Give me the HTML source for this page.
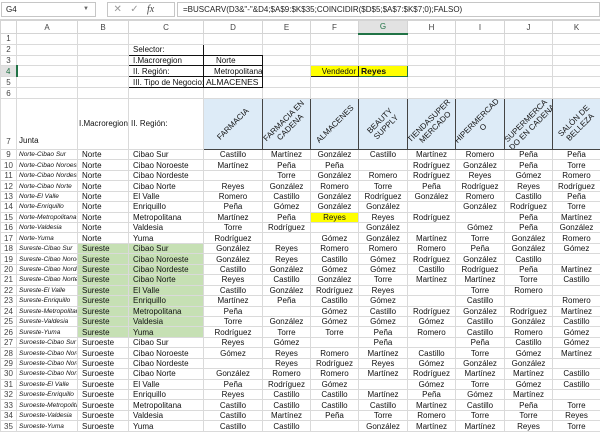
<!DOCTYPE html>
<html><head><meta charset="utf-8"><style>
*{margin:0;padding:0;box-sizing:border-box}
body{width:600px;height:432px;overflow:hidden;background:#fff;font-family:"Liberation Sans",Arial,sans-serif;position:relative}
#fb{position:absolute;left:0;top:0;width:600px;height:20px;background:#fff;border-bottom:1px solid #d4d4d4}
#nb{position:absolute;left:1px;top:2px;width:95px;height:15px;border:1px solid #c6c6c6;font-size:8px;line-height:13px;padding-left:4px;color:#222}
#nb span{position:absolute;right:6px;top:0;font-size:6px;color:#666}
#ic{position:absolute;left:107px;top:2px;width:68px;height:15px;border:1px solid #c6c6c6;font-size:10px;color:#999;line-height:13px}
#fx{position:absolute;left:177px;top:2px;width:423px;height:15px;border:1px solid #c6c6c6;font-size:8px;line-height:13px;padding-left:5px;color:#222;white-space:nowrap}
table{position:absolute;left:0;top:20px;border-collapse:collapse;table-layout:fixed;width:600px}
td{border:1px solid #dadada;font-size:8px;white-space:nowrap;overflow:hidden;padding:0 2px;color:#111;height:10.44px;line-height:9px;text-align:center}
tr.ch td{background:#fff;color:#444;height:13px;text-align:center;border-color:#d4d4d4}
td.rh{color:#444;text-align:center;padding:0;font-size:8px;background:#fff}
td.a{font-style:italic;font-size:6.5px;text-align:left;padding-left:2px}
td.l{text-align:left;padding-left:4px}
td.g{background:#c6e0b4}
.t td{height:10.83px}
td.hd{background:#ddebf7;border:1px solid #444;position:relative;padding:0}
td.hd div{position:absolute;left:50%;top:50%;width:64px;transform:translate(-50%,-50%) rotate(-45deg);text-align:center;font-size:8px;line-height:9px;white-space:normal;color:#111}
</style></head><body>
<div id="fb"><div id="nb">G4<span>▼</span></div>
<div id="ic">&nbsp;&nbsp;✕&nbsp;&nbsp;&nbsp;✓&nbsp;&nbsp;&nbsp;<i style="font-family:'Liberation Serif',serif;color:#444">fx</i></div>
<div id="fx">=BUSCARV(D3&amp;"-"&amp;D4;$A$9:$K$35;COINCIDIR($D$5;$A$7:$K$7;0);FALSO)</div></div>
<table>
<colgroup><col style="width:16px"><col style="width:61px"><col style="width:51px"><col style="width:75px"><col style="width:59px"><col style="width:48px"><col style="width:48px"><col style="width:49px"><col style="width:48px"><col style="width:49px"><col style="width:48px"><col style="width:48px"></colgroup>
<tr class="ch"><td></td><td>A</td><td>B</td><td>C</td><td>D</td><td>E</td><td>F</td><td style="background:#e2e2e2;color:#217346;border-bottom:2px solid #217346">G</td><td>H</td><td>I</td><td>J</td><td>K</td></tr>
<tr class="t"><td class="rh">1</td><td></td><td></td><td></td><td></td><td></td><td></td><td></td><td></td><td></td><td></td><td></td></tr>
<tr class="t"><td class="rh">2</td><td></td><td></td><td class="l" style="border:1.5px solid #111">Selector:</td><td style="border-bottom:1.5px solid #111"></td><td></td><td></td><td></td><td></td><td></td><td></td><td></td></tr>
<tr class="t"><td class="rh">3</td><td></td><td></td><td class="l" style="border:1px solid #111;border-left:1.5px solid #111">I.Macroregion</td><td class="l" style="border:1px solid #111;border-right:1.5px solid #111;padding-left:12px">Norte</td><td></td><td></td><td></td><td></td><td></td><td></td><td></td></tr>
<tr class="t"><td class="rh" style="background:#e2e2e2;color:#217346;border-right:2px solid #217346">4</td><td></td><td></td><td class="l" style="border:1px solid #111;border-left:1.5px solid #111">II. Región:</td><td class="l" style="border:1px solid #111;border-right:1.5px solid #111;padding-left:10px">Metropolitana</td><td></td><td style="background:#ffff00;border:1.5px solid #222;text-align:right">Vendedor</td><td style="background:#ffff00;border:1.5px solid #217346;text-align:left;font-weight:bold;font-size:8.5px">Reyes</td><td></td><td></td><td></td><td></td></tr>
<tr class="t"><td class="rh">5</td><td></td><td></td><td class="l" style="border:1px solid #111;border-left:1.5px solid #111;border-bottom:1.5px solid #111">III. Tipo de Negocio:</td><td class="l" style="border:1px solid #111;border-right:1.5px solid #111;border-bottom:1.5px solid #111;font-size:8.5px;padding-left:2px">ALMACENES</td><td></td><td></td><td></td><td></td><td></td><td></td><td></td></tr>
<tr class="t"><td class="rh">6</td><td></td><td></td><td></td><td></td><td></td><td></td><td></td><td></td><td></td><td></td><td></td></tr>
<tr><td class="rh" style="height:51px;vertical-align:bottom;padding-bottom:3px">7</td><td class="l" style="vertical-align:bottom;padding-left:2px;padding-bottom:4px">Junta</td><td class="l" style="padding-left:1px">I.Macroregion</td><td class="l" style="padding-left:2px">II. Región:</td>
<td class="hd"><div>FARMACIA</div></td><td class="hd"><div>FARMACIA EN CADENA</div></td><td class="hd"><div>ALMACENES</div></td><td class="hd"><div>BEAUTY SUPPLY</div></td><td class="hd"><div>TIENDASUPER MERCADO</div></td><td class="hd"><div>HIPERMERCAD O</div></td><td class="hd"><div>SUPERMERCA DO EN CADENA</div></td><td class="hd"><div>SALÓN DE BELLEZA</div></td></tr>
<tr><td class="rh">9</td><td class="a">Norte-Cibao Sur</td><td class="l">Norte</td><td class="l">Cibao Sur</td><td>Castillo</td><td>Martínez</td><td>González</td><td>Castillo</td><td>Martínez</td><td>Romero</td><td>Peña</td><td>Peña</td></tr>
<tr><td class="rh">10</td><td class="a">Norte-Cibao Noroeste</td><td class="l">Norte</td><td class="l">Cibao Noroeste</td><td>Martínez</td><td>Peña</td><td>Peña</td><td></td><td>Rodríguez</td><td>González</td><td>Peña</td><td>Torre</td></tr>
<tr><td class="rh">11</td><td class="a">Norte-Cibao Nordeste</td><td class="l">Norte</td><td class="l">Cibao Nordeste</td><td></td><td>Torre</td><td>González</td><td>Romero</td><td>Rodríguez</td><td>Reyes</td><td>Gómez</td><td>Romero</td></tr>
<tr><td class="rh">12</td><td class="a">Norte-Cibao Norte</td><td class="l">Norte</td><td class="l">Cibao Norte</td><td>Reyes</td><td>González</td><td>Romero</td><td>Torre</td><td>Peña</td><td>Rodríguez</td><td>Reyes</td><td>Rodríguez</td></tr>
<tr><td class="rh">13</td><td class="a">Norte-El Valle</td><td class="l">Norte</td><td class="l">El Valle</td><td>Romero</td><td>Castillo</td><td>González</td><td>Rodríguez</td><td>González</td><td>Romero</td><td>Castillo</td><td>Peña</td></tr>
<tr><td class="rh">14</td><td class="a">Norte-Enriquillo</td><td class="l">Norte</td><td class="l">Enriquillo</td><td>Peña</td><td>Gómez</td><td>González</td><td>González</td><td></td><td>González</td><td>Rodríguez</td><td>Torre</td></tr>
<tr><td class="rh">15</td><td class="a">Norte-Metropolitana</td><td class="l">Norte</td><td class="l">Metropolitana</td><td>Martínez</td><td>Peña</td><td style="background:#ffff00">Reyes</td><td>Reyes</td><td>Rodríguez</td><td></td><td>Peña</td><td>Martínez</td></tr>
<tr><td class="rh">16</td><td class="a">Norte-Valdesia</td><td class="l">Norte</td><td class="l">Valdesia</td><td>Torre</td><td>Rodríguez</td><td></td><td>González</td><td></td><td>Gómez</td><td>Peña</td><td>González</td></tr>
<tr><td class="rh">17</td><td class="a">Norte-Yuma</td><td class="l">Norte</td><td class="l">Yuma</td><td>Rodríguez</td><td></td><td>Gómez</td><td>González</td><td>Martínez</td><td>Torre</td><td>González</td><td>Romero</td></tr>
<tr><td class="rh">18</td><td class="a">Sureste-Cibao Sur</td><td class="l g">Sureste</td><td class="l g">Cibao Sur</td><td>González</td><td>Reyes</td><td>Romero</td><td>Romero</td><td>Romero</td><td>Peña</td><td>González</td><td>Gómez</td></tr>
<tr><td class="rh">19</td><td class="a">Sureste-Cibao Noroeste</td><td class="l g">Sureste</td><td class="l g">Cibao Noroeste</td><td>González</td><td>Reyes</td><td>Castillo</td><td>Gómez</td><td>Rodríguez</td><td>González</td><td>Castillo</td><td></td></tr>
<tr><td class="rh">20</td><td class="a">Sureste-Cibao Nordeste</td><td class="l g">Sureste</td><td class="l g">Cibao Nordeste</td><td>Castillo</td><td>González</td><td>Gómez</td><td>Gómez</td><td>Castillo</td><td>Rodríguez</td><td>Peña</td><td>Martínez</td></tr>
<tr><td class="rh">21</td><td class="a">Sureste-Cibao Norte</td><td class="l g">Sureste</td><td class="l g">Cibao Norte</td><td>Reyes</td><td>Castillo</td><td>González</td><td>Torre</td><td>Martínez</td><td>Martínez</td><td>Torre</td><td>Castillo</td></tr>
<tr><td class="rh">22</td><td class="a">Sureste-El Valle</td><td class="l g">Sureste</td><td class="l g">El Valle</td><td>Castillo</td><td>González</td><td>Rodríguez</td><td>Reyes</td><td></td><td>Torre</td><td>Romero</td><td></td></tr>
<tr><td class="rh">23</td><td class="a">Sureste-Enriquillo</td><td class="l g">Sureste</td><td class="l g">Enriquillo</td><td>Martínez</td><td>Peña</td><td>Castillo</td><td>Gómez</td><td></td><td>Castillo</td><td></td><td>Romero</td></tr>
<tr><td class="rh">24</td><td class="a">Sureste-Metropolitana</td><td class="l g">Sureste</td><td class="l g">Metropolitana</td><td>Peña</td><td></td><td>Gómez</td><td>Castillo</td><td>Rodríguez</td><td>González</td><td>Rodríguez</td><td>Martínez</td></tr>
<tr><td class="rh">25</td><td class="a">Sureste-Valdesia</td><td class="l g">Sureste</td><td class="l g">Valdesia</td><td>Torre</td><td>González</td><td>Gómez</td><td>Gómez</td><td>Gómez</td><td>Castillo</td><td>González</td><td>Castillo</td></tr>
<tr><td class="rh">26</td><td class="a">Sureste-Yuma</td><td class="l g">Sureste</td><td class="l g">Yuma</td><td>Rodríguez</td><td>Torre</td><td>Torre</td><td>Peña</td><td>Romero</td><td>Castillo</td><td>Romero</td><td>Gómez</td></tr>
<tr><td class="rh">27</td><td class="a">Suroeste-Cibao Sur</td><td class="l">Suroeste</td><td class="l">Cibao Sur</td><td>Reyes</td><td>Gómez</td><td></td><td>Peña</td><td></td><td>Peña</td><td>Castillo</td><td>Gómez</td></tr>
<tr><td class="rh">28</td><td class="a">Suroeste-Cibao Noroeste</td><td class="l">Suroeste</td><td class="l">Cibao Noroeste</td><td>Gómez</td><td>Reyes</td><td>Romero</td><td>Martínez</td><td>Castillo</td><td>Torre</td><td>Gómez</td><td>Martínez</td></tr>
<tr><td class="rh">29</td><td class="a">Suroeste-Cibao Nordeste</td><td class="l">Suroeste</td><td class="l">Cibao Nordeste</td><td></td><td>Reyes</td><td>Rodríguez</td><td>Reyes</td><td>Gómez</td><td>González</td><td>González</td><td></td></tr>
<tr><td class="rh">30</td><td class="a">Suroeste-Cibao Norte</td><td class="l">Suroeste</td><td class="l">Cibao Norte</td><td>González</td><td>Romero</td><td>Romero</td><td>Martínez</td><td>Rodríguez</td><td>Martínez</td><td>Martínez</td><td>Castillo</td></tr>
<tr><td class="rh">31</td><td class="a">Suroeste-El Valle</td><td class="l">Suroeste</td><td class="l">El Valle</td><td>Peña</td><td>Rodríguez</td><td>Gómez</td><td></td><td>Gómez</td><td>Torre</td><td>Gómez</td><td>Castillo</td></tr>
<tr><td class="rh">32</td><td class="a">Suroeste-Enriquillo</td><td class="l">Suroeste</td><td class="l">Enriquillo</td><td>Reyes</td><td>Castillo</td><td>Castillo</td><td>Martínez</td><td>Peña</td><td>Gómez</td><td>Martínez</td><td></td></tr>
<tr><td class="rh">33</td><td class="a">Suroeste-Metropolitana</td><td class="l">Suroeste</td><td class="l">Metropolitana</td><td>Castillo</td><td>Castillo</td><td>Castillo</td><td>Castillo</td><td>Martínez</td><td>Castillo</td><td>Peña</td><td>Torre</td></tr>
<tr><td class="rh">34</td><td class="a">Suroeste-Valdesia</td><td class="l">Suroeste</td><td class="l">Valdesia</td><td>Castillo</td><td>Martínez</td><td>Peña</td><td>Torre</td><td>Romero</td><td>Torre</td><td>Torre</td><td>Reyes</td></tr>
<tr><td class="rh">35</td><td class="a">Suroeste-Yuma</td><td class="l">Suroeste</td><td class="l">Yuma</td><td>Castillo</td><td>Castillo</td><td></td><td>González</td><td>Martínez</td><td>Martínez</td><td>Reyes</td><td>Torre</td></tr>
</table>
</body></html>
